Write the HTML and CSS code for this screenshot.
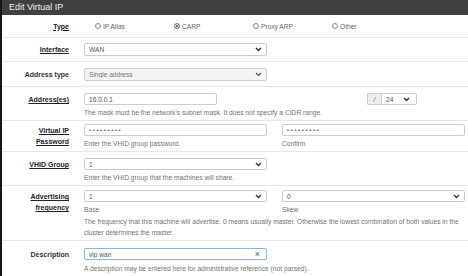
FILE: index.html
```html
<!DOCTYPE html>
<html lang="en">

<head>
    <meta charset="UTF-8">
    <meta name="viewport" content="width=device-width, initial-scale=1.0">
    <title>Edit Virtual IP</title>
    <link rel="stylesheet" href="styles.css">
</head>

<body>
    <div class="panel">
        <div class="panel-heading">Edit Virtual IP</div>

        <form class="vip-form">
            <div class="row row-type">
                <label class="label link">Type</label>
                <div class="radios">
                    <label class="radio"><input type="radio" name="mode"> IP Alias</label>
                    <label class="radio"><input type="radio" name="mode" checked> CARP</label>
                    <label class="radio"><input type="radio" name="mode"> Proxy ARP</label>
                    <label class="radio"><input type="radio" name="mode"> Other</label>
                </div>
            </div>

            <div class="row row-iface">
                <label class="label link" for="interface">Interface</label>
                <div class="select">
                    <select id="interface"><option>WAN</option></select>
                    <svg width="7" height="5" viewBox="0 0 7 5"><path d="M1 1 L3.5 3.5 L6 1" fill="none" stroke="#333" stroke-width="1.4"/></svg>
                </div>
            </div>

            <div class="row row-addrtype">
                <label class="label" for="addrtype">Address type</label>
                <div class="select disabled">
                    <select id="addrtype"><option>Single address</option></select>
                    <svg width="7" height="5" viewBox="0 0 7 5"><path d="M1 1 L3.5 3.5 L6 1" fill="none" stroke="#555" stroke-width="1.2"/></svg>
                </div>
            </div>

            <div class="row pad-6">
                <label class="label link" for="address">Address(es)</label>
                <div class="addr-group">
                    <input type="text" id="address" class="input addr" value="16.0.0.1">
                    <div class="cidr">
                        <span class="addon">/</span>
                        <div class="select small">
                            <select><option>24</option></select>
                            <svg width="7" height="5" viewBox="0 0 7 5"><path d="M1 1 L3.5 3.5 L6 1" fill="none" stroke="#333" stroke-width="1.4"/></svg>
                        </div>
                    </div>
                </div>
                <p class="help wide">The mask must be the network's subnet mask. It does not specify a CIDR range.</p>
            </div>

            <div class="row pad-3">
                <label class="label link" for="password">Virtual IP<br>Password</label>
                <div>
                    <input type="password" id="password" class="input secret" value="carppass1">
                    <p class="help">Enter the VHID group password.</p>
                </div>
                <div>
                    <input type="password" class="input secret" value="carppass1">
                    <p class="help">Confirm</p>
                </div>
            </div>

            <div class="row pad-6">
                <label class="label link" for="vhid">VHID Group</label>
                <div class="select">
                    <select id="vhid"><option>1</option></select>
                    <svg width="7" height="5" viewBox="0 0 7 5"><path d="M1 1 L3.5 3.5 L6 1" fill="none" stroke="#333" stroke-width="1.4"/></svg>
                </div>
                <p class="help wide">Enter the VHID group that the machines will share.</p>
            </div>

            <div class="row pad-4">
                <label class="label link" for="advbase">Advertising<br>frequency</label>
                <div>
                    <div class="select">
                        <select id="advbase"><option>1</option></select>
                        <svg width="7" height="5" viewBox="0 0 7 5"><path d="M1 1 L3.5 3.5 L6 1" fill="none" stroke="#333" stroke-width="1.4"/></svg>
                    </div>
                    <p class="help">Base</p>
                </div>
                <div>
                    <div class="select">
                        <select><option>0</option></select>
                        <svg width="7" height="5" viewBox="0 0 7 5"><path d="M1 1 L3.5 3.5 L6 1" fill="none" stroke="#333" stroke-width="1.4"/></svg>
                    </div>
                    <p class="help">Skew</p>
                </div>
                <p class="help wide para">The frequency that this machine will advertise. 0 means usually master. Otherwise the lowest combination of both values in the cluster determines the master.</p>
            </div>

            <div class="row pad-7 last">
                <label class="label" for="descr">Description</label>
                <div class="input clearable">
                    <input type="text" id="descr" value="vip wan">
                    <span class="clear">&times;</span>
                </div>
                <p class="help wide">A description may be entered here for administrative reference (not parsed).</p>
            </div>
        </form>
    </div>
</body>

</html>
```

FILE: styles.css
```css
* {
    box-sizing: border-box;
}

body {
    margin: 0;
    font-family: "Liberation Sans", Arial, sans-serif;
    background-color: #fff;
}

.panel {
    border-left: 2px solid #161616;
    min-height: 276px;
}

.panel-heading {
    height: 15px;
    line-height: 15px;
    padding-left: 7px;
    font-size: 9px;
    color: #f2f2f2;
    background-color: #3f3f3f;
}

.row {
    display: grid;
    grid-template-columns: 67px 183px 183px;
    column-gap: 15px;
    border-bottom: 1px solid #e6e6e6;
    padding-bottom: 2px;
}

.row.last {
    border-bottom: none;
}

.row-type {
    height: 23px;
    align-items: center;
    padding-bottom: 0;
}

.row-iface {
    height: 24px;
    align-items: center;
    padding-bottom: 0;
}

.row-addrtype {
    height: 25px;
    align-items: center;
    padding-bottom: 0;
}

.pad-3 {
    padding-top: 3px;
}

.pad-4 {
    padding-top: 4px;
}

.pad-6 {
    padding-top: 6px;
}

.pad-7 {
    padding-top: 7px;
}

.label {
    text-align: right;
    font-size: 7px;
    font-weight: bold;
    line-height: 11px;
    color: #333;
    padding-top: 1px;
}

.row-type .label,
.row-iface .label,
.row-addrtype .label {
    padding-top: 0;
}

.label.link {
    text-decoration: underline;
    color: #222;
}

.radios {
    grid-column: 2 / 4;
    display: flex;
    padding-left: 11px;
}

.radio {
    width: 79px;
    display: flex;
    align-items: center;
    font-size: 6.6px;
    color: #666;
}

.radio input {
    appearance: none;
    width: 6px;
    height: 6px;
    margin: 0 2px 0 0;
    border: 1px solid #8a8a8a;
    border-radius: 50%;
    background-color: #fff;
}

.radio input:checked {
    background-color: #444;
    box-shadow: inset 0 0 0 1px #fff;
}

.input,
.select select {
    display: block;
    width: 100%;
    height: 12px;
    padding: 0 4px;
    border: 1px solid #ccc;
    border-radius: 2px;
    font-family: inherit;
    font-size: 6.6px;
    color: #555;
    background-color: #fff;
    outline: none;
}

.select {
    position: relative;
}

.row-iface .select select,
.row-addrtype .select select {
    height: 13px;
}

.select select {
    appearance: none;
}

.select svg {
    position: absolute;
    right: 5px;
    top: 4px;
}

.select.disabled select {
    background-color: #f4f4f4;
    color: #777;
}

.addr-group {
    grid-column: 2 / 4;
    display: flex;
}

.input.addr {
    width: 133px;
}

.cidr {
    display: flex;
    margin-left: 150px;
}

.addon {
    width: 14px;
    height: 12px;
    line-height: 12px;
    text-align: center;
    font-size: 6.6px;
    font-style: italic;
    color: #555;
    background-color: #eee;
    border: 1px solid #ccc;
    border-right: none;
    border-radius: 2px 0 0 2px;
}

.select.small {
    width: 36px;
}

.select.small select {
    border-radius: 0 2px 2px 0;
}

.select.small svg {
    right: 7px;
}

.input.secret {
    letter-spacing: 1.6px;
    font-size: 6px;
}

.help {
    margin: 2px 0 0;
    font-size: 6.7px;
    line-height: 11px;
    color: #737373;
}

.help.wide {
    grid-column: 2 / 4;
}

.help.para {
    margin-top: 1px;
}

.clearable {
    display: flex;
    align-items: center;
    border-color: #86b7e6;
    padding-right: 6px;
}

.clearable input {
    flex: 1;
    min-width: 0;
    border: none;
    padding: 0;
    font-family: inherit;
    font-size: 6.6px;
    color: #555;
    outline: none;
    background: transparent;
}

.clear {
    font-size: 9px;
    line-height: 10px;
    color: #555;
}

.last .help {
    margin-top: 3px;
}
```
